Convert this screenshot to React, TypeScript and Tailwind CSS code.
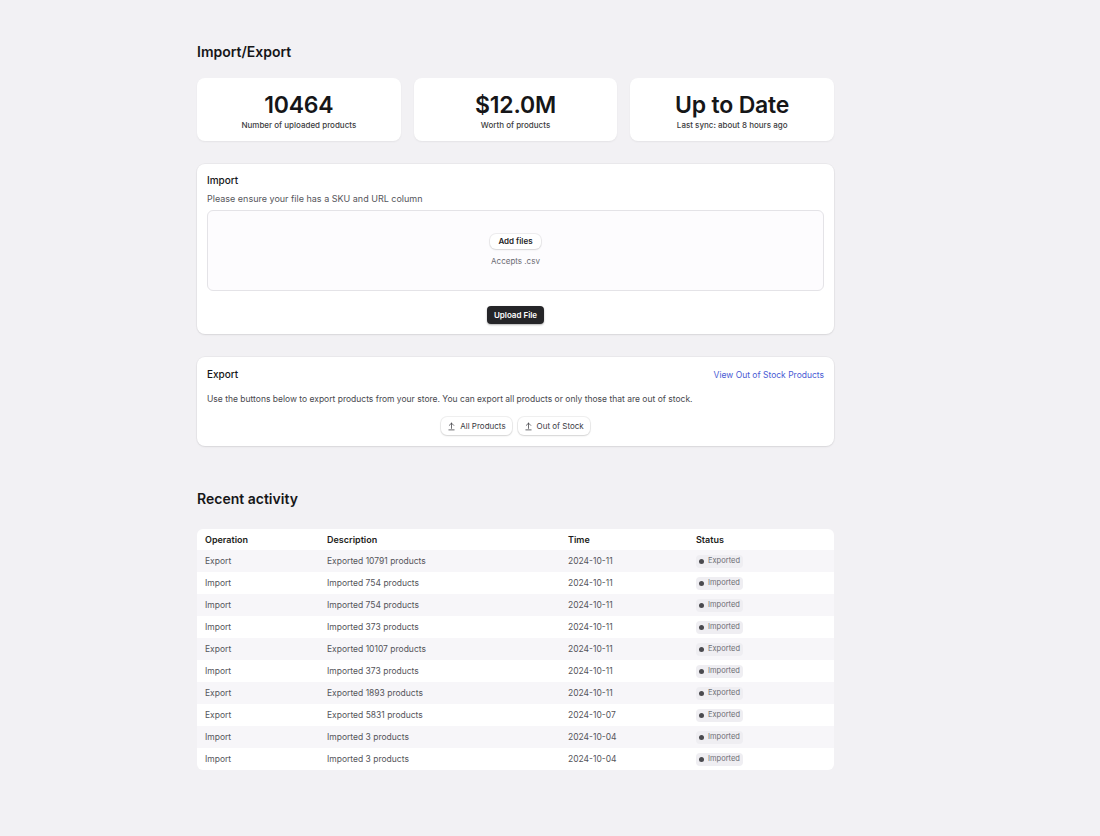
import { ArrowUpFromLine } from 'lucide-react';

type Activity = {
  op: string;
  desc: string;
  time: string;
  status: string;
};

const stats = [
  { value: '10464', label: 'Number of uploaded products' },
  { value: '$12.0M', label: 'Worth of products' },
  { value: 'Up to Date', label: 'Last sync: about 8 hours ago' },
];

const activity: Activity[] = [
  { op: 'Export', desc: 'Exported 10791 products', time: '2024-10-11', status: 'Exported' },
  { op: 'Import', desc: 'Imported 754 products', time: '2024-10-11', status: 'Imported' },
  { op: 'Import', desc: 'Imported 754 products', time: '2024-10-11', status: 'Imported' },
  { op: 'Import', desc: 'Imported 373 products', time: '2024-10-11', status: 'Imported' },
  { op: 'Export', desc: 'Exported 10107 products', time: '2024-10-11', status: 'Exported' },
  { op: 'Import', desc: 'Imported 373 products', time: '2024-10-11', status: 'Imported' },
  { op: 'Export', desc: 'Exported 1893 products', time: '2024-10-11', status: 'Exported' },
  { op: 'Export', desc: 'Exported 5831 products', time: '2024-10-07', status: 'Exported' },
  { op: 'Import', desc: 'Imported 3 products', time: '2024-10-04', status: 'Imported' },
  { op: 'Import', desc: 'Imported 3 products', time: '2024-10-04', status: 'Imported' },
];

function ExportButton({ label }: { label: string }) {
  return (
    <button className="flex h-[18px] items-center gap-1 rounded-md bg-white px-[6px] text-[8px] text-[#3a3a3f] shadow-[0_0_0_1px_rgba(0,0,0,0.06),0_1px_2px_rgba(0,0,0,0.12)]">
      <ArrowUpFromLine className="h-[9px] w-[9px]" strokeWidth={2} />
      {label}
    </button>
  );
}

export default function App() {
  return (
    <div
      className="min-h-[836px] w-full bg-[#f2f1f4] text-[#161618]"
      style={{ fontFamily: 'Inter, "Noto Sans", sans-serif' }}
    >
      <div className="ml-[197px] w-[637px] pt-[43px]">
        <h1 className="text-[14px] font-semibold leading-[18px]">Import/Export</h1>

        {/* Stat cards */}
        <div className="mt-[17px] grid grid-cols-3 gap-[13px]">
          {stats.map((s) => (
            <div
              key={s.label}
              className="flex h-[63px] flex-col items-center justify-center rounded-lg bg-white pt-[1px] shadow-[0_1px_2px_rgba(0,0,0,0.06)]"
            >
              <div className="text-[23px] font-semibold leading-[28px] tracking-[-0.2px]">{s.value}</div>
              <div className="mt-[1px] text-[8px] font-medium leading-[10px] text-[#3b3b40]">{s.label}</div>
            </div>
          ))}
        </div>

        {/* Import */}
        <div className="mt-[23px] rounded-lg bg-white px-[10px] pt-[10px] pb-[10px] shadow-[0_0_0_1px_rgba(0,0,0,0.03),0_1px_2px_rgba(0,0,0,0.08)]">
          <div className="text-[10px] font-medium leading-[13px]">Import</div>
          <div className="mt-[6px] text-[9px] leading-[12px] text-[#56565c]">
            Please ensure your file has a SKU and URL column
          </div>
          <div className="mt-[5px] flex h-[81px] flex-col items-center justify-center rounded-md border border-[#e4e3e7] bg-[#fdfcfe]">
            <button className="mt-[-2px] h-[15px] rounded-md bg-white px-[8px] text-[8px] font-semibold text-[#222225] shadow-[0_0_0_1px_rgba(0,0,0,0.06),0_1px_2px_rgba(0,0,0,0.1)]">
              Add files
            </button>
            <div className="mt-[7px] text-[8px] leading-[10px] text-[#6b6b72]">Accepts .csv</div>
          </div>
          <div className="mt-[15px] flex justify-center">
            <button className="h-[18px] rounded-[4px] bg-[#252528] px-[7px] text-[8px] font-semibold text-white shadow-[0_1px_2px_rgba(0,0,0,0.3)]">
              Upload File
            </button>
          </div>
        </div>

        {/* Export */}
        <div className="mt-[23px] rounded-lg bg-white px-[10px] pt-[11px] pb-[11px] shadow-[0_0_0_1px_rgba(0,0,0,0.03),0_1px_2px_rgba(0,0,0,0.08)]">
          <div className="flex items-center justify-between">
            <div className="text-[10px] font-medium leading-[13px]">Export</div>
            <a className="text-[8.5px] leading-[12px] text-[#4a5bd4]">View Out of Stock Products</a>
          </div>
          <div className="mt-[12px] text-[8.5px] leading-[12px] text-[#48484e]">
            Use the buttons below to export products from your store. You can export all products or only those that are out of stock.
          </div>
          <div className="mt-[12px] flex justify-center gap-[6px]">
            <ExportButton label="All Products" />
            <ExportButton label="Out of Stock" />
          </div>
        </div>

        {/* Recent activity */}
        <h2 className="mt-[44px] text-[14px] font-semibold leading-[18px]">Recent activity</h2>

        <div className="mt-[21px] overflow-hidden rounded-md">
          <div className="grid h-[21px] grid-cols-[122px_241px_128px_1fr] items-center bg-white pl-[8px] text-[9px] font-semibold text-[#1d1d20]">
            <div>Operation</div>
            <div>Description</div>
            <div>Time</div>
            <div>Status</div>
          </div>
          {activity.map((row, i) => (
            <div
              key={i}
              className={`grid h-[22px] grid-cols-[122px_241px_128px_1fr] items-center pl-[8px] text-[8.5px] text-[#55555b] ${
                i % 2 === 0 ? 'bg-[#f7f6f9]' : 'bg-white'
              }`}
            >
              <div>{row.op}</div>
              <div>{row.desc}</div>
              <div>{row.time}</div>
              <div>
                <span className="inline-flex h-[13px] items-center gap-[4px] rounded-[4px] bg-[#efeef2] px-[3px] text-[7.5px] text-[#6d6d73]">
                  <span className="h-[5px] w-[5px] rounded-full bg-[#4a4a4f]" />
                  {row.status}
                </span>
              </div>
            </div>
          ))}
        </div>
      </div>
    </div>
  );
}
